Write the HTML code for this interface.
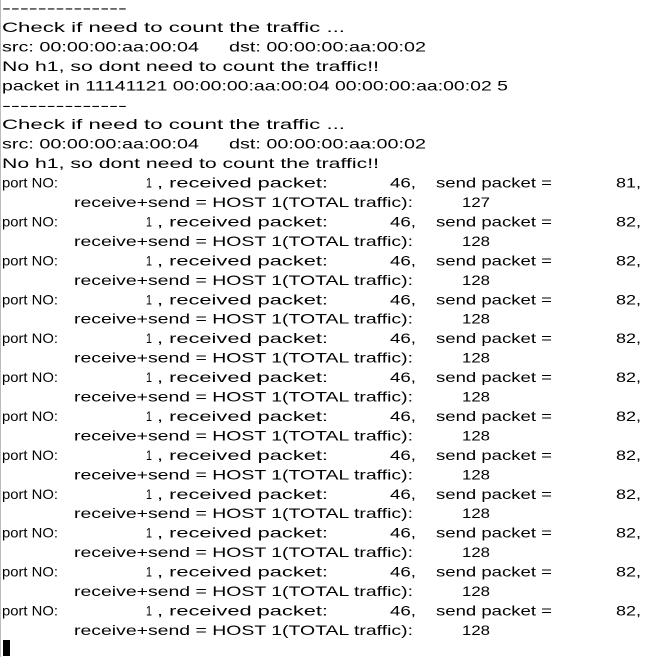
<!DOCTYPE html>
<html><head><meta charset="utf-8"><style>
html,body{margin:0;padding:0;background:#fff;}
svg{display:block;}
text{font-family:"Liberation Sans",sans-serif;font-size:14px;fill:#000;}
</style></head><body>
<svg width="662" height="657" viewBox="0 0 662 657" xmlns="http://www.w3.org/2000/svg">
<rect x="0" y="0" width="662" height="657" fill="#fff"/>
<rect x="0" y="0" width="1" height="657" fill="#bbb"/>
<g>
<text x="2" y="12.5" textLength="125" lengthAdjust="spacingAndGlyphs">--------------</text>
<text x="2" y="32" textLength="343" lengthAdjust="spacingAndGlyphs">Check if need to count the traffic ...</text>
<text x="2" y="51.4" textLength="197" lengthAdjust="spacingAndGlyphs">src: 00:00:00:aa:00:04</text>
<text x="229" y="51.4" textLength="197" lengthAdjust="spacingAndGlyphs">dst: 00:00:00:aa:00:02</text>
<text x="2" y="70.9" textLength="377" lengthAdjust="spacingAndGlyphs">No h1, so dont need to count the traffic!!</text>
<text x="2" y="90.3" textLength="506" lengthAdjust="spacingAndGlyphs">packet in 11141121 00:00:00:aa:00:04 00:00:00:aa:00:02 5</text>
<text x="2" y="109.8" textLength="125" lengthAdjust="spacingAndGlyphs">--------------</text>
<text x="2" y="129.2" textLength="343" lengthAdjust="spacingAndGlyphs">Check if need to count the traffic ...</text>
<text x="2" y="148.7" textLength="197" lengthAdjust="spacingAndGlyphs">src: 00:00:00:aa:00:04</text>
<text x="229" y="148.7" textLength="197" lengthAdjust="spacingAndGlyphs">dst: 00:00:00:aa:00:02</text>
<text x="2" y="168.1" textLength="377" lengthAdjust="spacingAndGlyphs">No h1, so dont need to count the traffic!!</text>
</g>
<g id="pairs"></g>
<rect x="3" y="640" width="7" height="16" fill="#000"/>
</svg>
<script>
(function(){
var g=document.getElementById('pairs');var ns="http://www.w3.org/2000/svg";
function t(x,y,w,s){var e=document.createElementNS(ns,'text');e.setAttribute('x',x);e.setAttribute('y',y);e.setAttribute('textLength',w);e.setAttribute('lengthAdjust','spacingAndGlyphs');e.textContent=s;g.appendChild(e);}
for(var k=0;k<12;k++){
 var y1=12.5+19.45*(9+2*k), y2=12.5+19.45*(10+2*k);
 t(2,y1,56,'port NO:');
 t(146,y1,6,'1');
 t(157,y1,171,', received packet:');
 t(390,y1,26,'46,');
 t(436,y1,116,'send packet =');
 t(616,y1,25,k==0?'81,':'82,');
 t(74,y2,339,'receive+send = HOST 1(TOTAL traffic):');
 t(462,y2,28,k==0?'127':'128');
}
})();
</script>
</body></html>
